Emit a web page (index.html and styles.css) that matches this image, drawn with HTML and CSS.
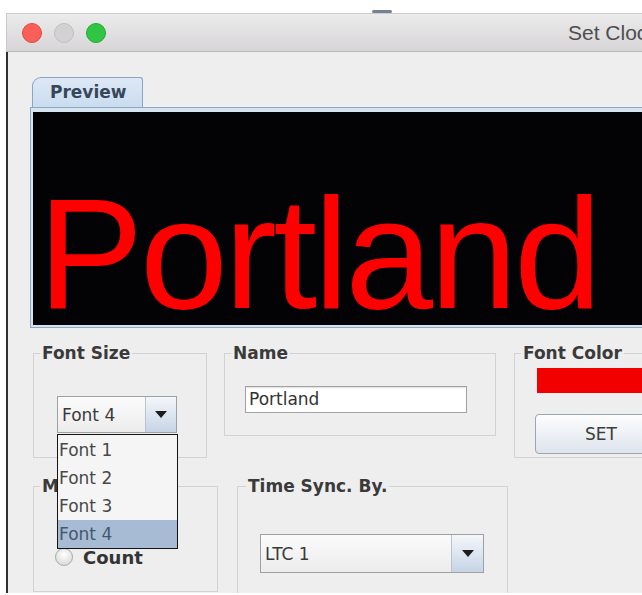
FILE: index.html
```html
<!DOCTYPE html>
<html>
<head>
<meta charset="utf-8">
<link rel="stylesheet" href="styles.css">
</head>
<body>
<div class="desk"><span class="mark"></span></div>
<div class="window">
  <div class="titlebar">
    <div class="lights">
      <span class="light red"></span>
      <span class="light gray"></span>
      <span class="light green"></span>
    </div>
    <div class="title">Set Clock Display</div>
  </div>
  <div class="content">
    <div class="tab">Preview</div>
    <div class="panel">
      <div class="screen"><span class="screen-text">Portland</span></div>
    </div>

    <div class="row row1">
      <fieldset class="group g-size">
        <legend>Font Size</legend>
        <div class="inner inner-size">
          <div class="combo-wrap">
            <div class="combo combo-size">
              <span class="combo-value">Font 4</span>
              <span class="combo-btn"><svg width="12" height="7" viewBox="0 0 12 7"><path d="M0 0H12L6 7Z" fill="#1c1c1c"/></svg></span>
            </div>
            <ul class="list">
              <li>Font 1</li>
              <li>Font 2</li>
              <li>Font 3</li>
              <li class="sel">Font 4</li>
            </ul>
          </div>
        </div>
      </fieldset>

      <fieldset class="group g-name">
        <legend>Name</legend>
        <div class="inner inner-name">
          <div class="field">Portland</div>
        </div>
      </fieldset>

      <fieldset class="group g-color">
        <legend>Font Color</legend>
        <div class="inner inner-color">
          <div class="swatch"></div>
          <div class="button">SET</div>
        </div>
      </fieldset>
    </div>

    <div class="row row2">
      <fieldset class="group g-mode">
        <legend>Mode</legend>
        <div class="inner inner-mode">
          <div class="radio-row"><span class="radio"></span><span class="radio-label">Count</span></div>
        </div>
      </fieldset>

      <fieldset class="group g-time">
        <legend class="legend-time">Time Sync. By.</legend>
        <div class="inner inner-time">
          <div class="combo combo-time">
            <span class="combo-value">LTC 1</span>
            <span class="combo-btn wide"><svg width="12" height="7" viewBox="0 0 12 7"><path d="M0 0H12L6 7Z" fill="#1c1c1c"/></svg></span>
          </div>
        </div>
      </fieldset>
    </div>
  </div>
</div>
</body>
</html>
```

FILE: styles.css
```css
html, body {
  margin: 0;
  padding: 0;
  background: #ffffff;
  overflow: hidden;
  width: 642px;
  height: 595px;
}

body {
  font-family: "DejaVu Sans", sans-serif;
}

.desk {
  height: 13px;
  border-bottom: 1px solid #cccccc;
  display: flex;
  align-items: flex-end;
  padding-left: 366px;
  margin-left: 6px;
}

.mark {
  width: 20px;
  height: 3px;
  background: #3b4d6a;
  border-radius: 2px;
  opacity: 0.7;
}

.window {
  margin-left: 6px;
  width: 636px;
  overflow: hidden;
}

.titlebar {
  height: 38px;
  box-sizing: border-box;
  border-left: 1px solid #c9c9c9;
  border-bottom: 1px solid #b6b6b6;
  background: linear-gradient(#ecebec, #d7d5d7);
  display: flex;
  align-items: center;
  white-space: nowrap;
}

.lights {
  display: flex;
  gap: 12px;
  padding-left: 15px;
  flex: none;
}

.light {
  width: 20px;
  height: 20px;
  border-radius: 50%;
  box-sizing: border-box;
}

.red { background: #fc5e58; border: 1px solid #e4463f; }
.gray { background: #d2d2d2; border: 1px solid #c0c0c0; }
.green { background: #30c544; border: 1px solid #23a834; }

.title {
  margin-left: 462px;
  font-family: "Liberation Sans", Arial, sans-serif;
  font-size: 21px;
  color: #4e4e4e;
  flex: none;
}

.content {
  border-left: 2px solid #2f2f2f;
  background: #eeeeee;
  height: 541px;
  box-sizing: border-box;
  padding-top: 25px;
  padding-left: 22px;
  overflow: hidden;
}

.tab {
  margin-left: 2px;
  width: 111px;
  height: 30px;
  box-sizing: border-box;
  border: 1px solid #8ca5c4;
  border-bottom: 0;
  border-radius: 9px 3px 0 0;
  background: linear-gradient(#dde8f5, #cbdcef);
  font-weight: bold;
  font-size: 17px;
  line-height: 29px;
  color: #36475a;
  padding-left: 17px;
}

.panel {
  border: 1px solid #8ea7c4;
  border-right: 0;
  background: #d6e3f1;
  padding: 4px 0 2px 2px;
}

.screen {
  height: 213px;
  box-sizing: border-box;
  background: #030205;
  overflow: hidden;
  padding-top: 62px;
  padding-left: 5px;
}

.screen-text {
  display: block;
  font-family: "Liberation Sans", Arial, sans-serif;
  font-size: 158px;
  line-height: 158px;
  letter-spacing: -3.5px;
  color: #fe0000;
  white-space: nowrap;
}

.row {
  display: flex;
  align-items: flex-start;
  margin-left: 3px;
}

.row1 { margin-top: 15px; }
.row2 { margin-top: 18px; }

.group {
  margin: 0;
  padding: 0;
  border: 1px solid #d2d2d2;
  box-sizing: border-box;
  min-width: 0;
  flex: none;
}

.group legend {
  padding: 0 2px;
  margin-left: 6px;
  font-weight: bold;
  font-size: 17px;
  line-height: 20px;
  color: #3a3a3a;
  white-space: nowrap;
}

.group legend.legend-time { margin-left: 8px; }

.inner { box-sizing: border-box; }

.g-size { width: 174px; }
.inner-size { height: 94px; padding: 33px 0 0 23px; }

.g-name { width: 272px; margin-left: 17px; }
.inner-name { height: 72px; padding: 23px 0 0 20px; }

.g-color { width: 200px; margin-left: 18px; }
.inner-color { height: 94px; padding: 5px 0 0 22px; }

.g-mode { width: 185px; }
.inner-mode { height: 95px; padding: 51px 0 0 21px; }

.g-time { width: 271px; margin-left: 19px; }
.inner-time { height: 120px; padding: 38px 0 0 22px; }

.combo-wrap {
  position: relative;
  width: 120px;
}

.combo {
  display: flex;
  box-sizing: border-box;
  border: 1px solid #a0a0a0;
  background: linear-gradient(#fbfbfb, #ececec);
}

.combo-size { width: 120px; height: 37px; }
.combo-time { width: 224px; height: 39px; }

.combo-value {
  flex: 1;
  padding-left: 4px;
  font-size: 17px;
  color: #3a3a3a;
  display: flex;
  align-items: center;
}

.combo-btn {
  width: 30px;
  flex: none;
  border-left: 1px solid #b9c3d0;
  background: linear-gradient(#f4f7fb, #c6d4e6);
  display: flex;
  align-items: center;
  justify-content: center;
}

.combo-btn.wide { width: 31px; }

.list {
  position: absolute;
  top: calc(100% + 1px);
  left: 0;
  width: 121px;
  box-sizing: border-box;
  margin: 0;
  padding: 1px 0 0;
  list-style: none;
  border: 1px solid #141414;
  background: #f5f5f5;
  z-index: 5;
}

.list li {
  height: 28px;
  line-height: 28px;
  padding-left: 1px;
  font-size: 17px;
  color: #484848;
}

.list li.sel {
  background: #a8bbd4;
  color: #46576d;
}

.field {
  width: 222px;
  height: 27px;
  box-sizing: border-box;
  border: 1px solid #a3a3a3;
  background: #ffffff;
  box-shadow: inset 0 1px 1px rgba(0, 0, 0, 0.12);
  padding-left: 3px;
  font-size: 17px;
  line-height: 25px;
  color: #333333;
}

.swatch {
  width: 132px;
  height: 25px;
  background: #f20000;
}

.button {
  margin-top: 21px;
  margin-left: -2px;
  width: 132px;
  height: 40px;
  box-sizing: border-box;
  border: 1px solid #9ba6b1;
  border-radius: 4px;
  background: linear-gradient(#fdfdfd, #dde4ec);
  font-size: 17px;
  line-height: 38px;
  text-align: center;
  color: #3c3c3c;
}

.radio-row {
  display: flex;
  align-items: center;
  height: 20px;
}

.radio {
  width: 18px;
  height: 18px;
  box-sizing: border-box;
  border-radius: 50%;
  border: 1px solid #a9a9a9;
  background: radial-gradient(circle at 50% 35%, #ffffff, #d2d2d2);
  flex: none;
}

.radio-label {
  margin-left: 10px;
  font-weight: bold;
  font-size: 18px;
  color: #343434;
}
```
